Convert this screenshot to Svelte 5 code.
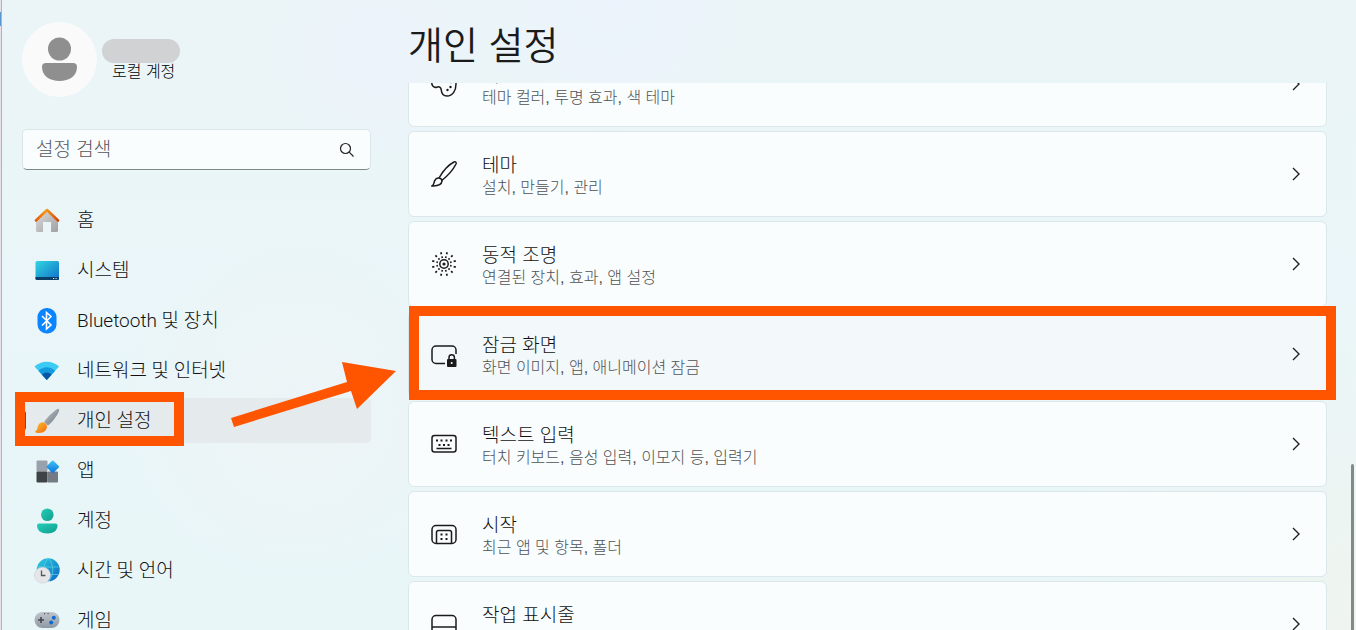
<script>
	import { onMount } from 'svelte';

	const menu = [
		{ id: 'home', label: '홈' },
		{ id: 'system', label: '시스템' },
		{ id: 'bluetooth', label: 'Bluetooth 및 장치' },
		{ id: 'network', label: '네트워크 및 인터넷' },
		{ id: 'personal', label: '개인 설정' },
		{ id: 'apps', label: '앱' },
		{ id: 'account', label: '계정' },
		{ id: 'time', label: '시간 및 언어' },
		{ id: 'game', label: '게임' }
	];

	const cards = [
		{ id: 'color', title: '색', text: '테마 컬러, 투명 효과, 색 테마' },
		{ id: 'theme', title: '테마', text: '설치, 만들기, 관리' },
		{ id: 'light', title: '동적 조명', text: '연결된 장치, 효과, 앱 설정' },
		{ id: 'lock', title: '잠금 화면', text: '화면 이미지, 앱, 애니메이션 잠금' },
		{ id: 'text', title: '텍스트 입력', text: '터치 키보드, 음성 입력, 이모지 등, 입력기' },
		{ id: 'start', title: '시작', text: '최근 앱 및 항목, 폴더' },
		{ id: 'taskbar', title: '작업 표시줄', text: '' }
	];

	const rays = Array.from({ length: 12 }, (_, i) => i * 30 + 15);

	let current = 'personal';
	let search = '';
	let list;

	onMount(() => {
		list.scrollTop = 42;
	});
</script>

<div class="window">
	<div class="edge"></div>
	<aside>
		<div class="user">
			<svg class="avatar" viewBox="0 0 75 75">
				<circle cx="37.5" cy="37.5" r="37.5" fill="#fafafa" />
				<circle cx="37.5" cy="27" r="11.5" fill="#8f8f8f" />
				<path d="M24 41h27q4 0 4 4c0 9-8 14-17.500 14S20 54 20 45q0-4 4-4z" fill="#8f8f8f" />
			</svg>
			<div class="who">
				<div class="name"></div>
				<div class="kind">로컬 계정</div>
			</div>
		</div>

		<div class="search">
			<input bind:value={search} placeholder="설정 검색" aria-label="설정 검색" />
			<svg width="16" height="16" viewBox="0 0 16 16" fill="none" stroke="#222" stroke-width="1.200">
				<circle cx="6.500" cy="6.500" r="5" />
				<path d="M10.200 10.200l4.300 4.300" />
			</svg>
		</div>

		<nav>
			{#each menu as item}
				<a
					href="#{item.id}"
					class:active={current === item.id}
					on:click|preventDefault={() => (current = item.id)}
				>
					<svg class="icon" viewBox="0 0 26 26">
						{#if item.id === 'home'}
							<defs>
								<linearGradient id="wall" x1="0" y1="0" x2="1" y2="1"><stop stop-color="#dcdcdc" /><stop offset="1" stop-color="#a0a0a3" /></linearGradient>
								<linearGradient id="roof"><stop stop-color="#e8590c" /><stop offset=".45" stop-color="#f59a17" /><stop offset="1" stop-color="#d9430b" /></linearGradient>
							</defs>
							<path d="M13 3L2 13v9.500q0 1.500 1.500 1.500H9V14h8v10h5.500q1.500 0 1.500-1.500V13z" fill="url(#wall)" />
							<path d="M2 12.500L13 2l11 10.500" fill="none" stroke="url(#roof)" stroke-width="2.600" stroke-linecap="round" stroke-linejoin="round" />
						{:else if item.id === 'system'}
							<defs>
								<linearGradient id="screen" x1="0" y1="0" x2="1" y2="1"><stop stop-color="#32d6e2" /><stop offset="1" stop-color="#0f6fc9" /></linearGradient>
							</defs>
							<rect x="1.500" y="3" width="23.500" height="19" rx="1.500" fill="url(#screen)" />
							<path d="M1.500 19H25v1.500q0 1.500-1.500 1.500H3q-1.500 0-1.500-1.500z" fill="#0b3d66" />
							<path d="M19 20.500h1.200M21.500 20.500h1.200" stroke="#d5e6ef" />
						{:else if item.id === 'bluetooth'}
							<rect x="3.500" y="0" width="19" height="25.500" rx="9" fill="#0a84ff" />
							<path d="M8 8l9 9-4.500 4V4.500L17 8.500l-9 9" fill="none" stroke="#fff" stroke-width="1.600" />
						{:else if item.id === 'network'}
							<path d="M0.500 8.500C7 2.200 18.500 2.200 25 8.500L12.800 22z" fill="#3ccbf4" />
							<path d="M4.500 13c4.500-5 12-5 16.500 0L12.800 22z" fill="#159bdd" />
							<path d="M8 16.800c2.500-3.200 7-3.200 9.500 0L12.800 22z" fill="#0b55a5" />
						{:else if item.id === 'personal'}
							<defs>
								<linearGradient id="stick" x1="0" y1="0" x2="1" y2="1"><stop stop-color="#c3cad1" /><stop offset="1" stop-color="#69717b" /></linearGradient>
								<linearGradient id="paint" x1="0" y1="0" x2="1" y2="1"><stop stop-color="#ffc22d" /><stop offset="1" stop-color="#ee6a12" /></linearGradient>
							</defs>
							<path d="M23.500 1c1.500-.5 2 .5 1.500 2-2 5-6.500 11-11 14.500l-4-3.500C13.500 9 19 3.500 23.500 1z" fill="url(#stick)" />
							<path d="M5 16c2.500-3 6-2 7.500.5 2 5-3 8.500-7.500 8.500-2 0-4-.5-4-1.500 3-1.500 2-5 4-7.500z" fill="url(#paint)" />
						{:else if item.id === 'apps'}
							<defs>
								<linearGradient id="gem" x1="0" y1="0" x2="1" y2="1"><stop stop-color="#45c5f7" /><stop offset="1" stop-color="#0872d8" /></linearGradient>
							</defs>
							<rect x="2.500" y="2.500" width="11" height="11" rx="1" fill="#9aa1ab" />
							<rect x="2.500" y="13.500" width="11" height="11" rx="1" fill="#3e4347" />
							<rect x="13.500" y="13.500" width="10.500" height="11" rx="1" fill="#737a83" />
							<rect x="14" y="4" width="9.500" height="9.500" rx="1" fill="url(#gem)" transform="rotate(45 18.750 8.750)" />
						{:else if item.id === 'account'}
							<defs>
								<linearGradient id="teal" x1="0" y1="0" x2="1" y2="1"><stop stop-color="#26cdb9" /><stop offset="1" stop-color="#109e8f" /></linearGradient>
							</defs>
							<circle cx="13.300" cy="6.800" r="6.300" fill="url(#teal)" />
							<path d="M5 15.500h16.500q2 0 2 2c0 5-4 8-10.200 8S3 22.500 3 17.500q0-2 2-2z" fill="url(#teal)" />
						{:else if item.id === 'time'}
							<defs>
								<linearGradient id="globe" x1="0" y1="0" x2="1" y2="1"><stop stop-color="#2fd0dd" /><stop offset="1" stop-color="#0c64c4" /></linearGradient>
							</defs>
							<circle cx="14.200" cy="11.800" r="11.500" fill="url(#globe)" />
							<path d="M3 9h21.500M8 16.500h16M13.500 1c-5 6-5 15 0 22M15 1c5 6 5 15 0 22" fill="none" stroke="#59d5ec" opacity=".7" />
							<circle cx="8.500" cy="17.200" r="8" fill="#e6e6e8" stroke="#c4c8ca" stroke-width=".5" />
							<path d="M7.500 12.500v5H11.500" fill="none" stroke="#58595b" stroke-width="1.300" />
						{:else}
							<defs>
								<linearGradient id="pad" x1="0" y1="0" x2="0" y2="1"><stop stop-color="#c0c6cd" /><stop offset="1" stop-color="#8f98a3" /></linearGradient>
							</defs>
							<rect x="0.500" y="4" width="25" height="16" rx="8" fill="url(#pad)" />
							<path d="M4 12h6M7 9v6" stroke="#44484e" stroke-width="1.600" />
							<circle cx="19.800" cy="9.800" r="2" fill="#0e6cd0" />
							<circle cx="17.200" cy="14.500" r="2" fill="#0e6cd0" />
							<path d="M10 5.700h1.200M13.500 5.700h1.200" stroke="#44484e" />
						{/if}
					</svg>
					<span>{item.label}</span>
					{#if item.id === 'personal'}
						<i class="mark"></i>
					{/if}
				</a>
			{/each}
		</nav>
	</aside>

	<main>
		<h1>개인 설정</h1>
		<div class="list" bind:this={list}>
			{#each cards as card}
				<button class="card" class:hover={card.id === 'lock'}>
					<svg class="icon line" viewBox="0 0 26 26">
						{#if card.id === 'color'}
							<path d="M.8 13c.8 2.800 3 3.800 5 3.200 3-1 4.200.3 4.500 3 .3 3.500 2.500 5.800 5.700 5.800 5.500 0 9-5 9-12C25 6 20 1 13 1 6 1 2 6 .8 13z" />
							<g fill="#1b1b1b" stroke="none">
								<circle cx="16.500" cy="19" r="1.200" />
								<circle cx="19.500" cy="16" r="1.200" />
								<circle cx="20" cy="11" r="1.200" />
							</g>
						{:else if card.id === 'theme'}
							<path d="M8 17C12 10 18 3.500 23 1c1.500-.7 2.700.5 2 2C22.500 8 17 14.500 10.800 19.500" />
							<path d="M8 17c2 .2 3 1.200 3 3.200-.5 4-4 5-10 4.700 2.300-1.200 1.800-3 2.600-5C4.500 18 6 16.800 8 17z" />
						{:else if card.id === 'light'}
							<circle cx="13" cy="13" r="4.200" />
							<circle cx="13" cy="13" r="1.600" fill="#1b1b1b" stroke="none" />
							{#each rays as a}
								<path d="M13 6.700v-1.600M13 3V.8" stroke-width="1.700" transform="rotate({a} 13 13)" />
							{/each}
						{:else if card.id === 'lock'}
							<path d="M14 22.500H5a4 4 0 0 1-4-4V9a4 4 0 0 1 4-4h16a4 4 0 0 1 4 4v4" />
							<rect x="16" y="18" width="9.500" height="8" rx="1" fill="#1b1b1b" stroke="none" />
							<path d="M18 18v-1.500a2.700 2.700 0 0 1 5.400 0V18" />
							<circle cx="20.700" cy="22" r="1" fill="#fff" stroke="none" />
						{:else if card.id === 'text'}
							<rect x="1" y="4.500" width="24" height="16.500" rx="2.500" />
							<path d="M5 9.500h2M9.500 9.500h2M14.500 9.500h2M19 9.500h2M7.500 14h2M12 14h2M16.500 14h2" stroke-width="2" />
							<path d="M5.500 17.500h15" />
						{:else if card.id === 'start'}
							<rect x="1" y="4.500" width="24" height="18" rx="4" />
							<path d="M5.500 22V11.500a2 2 0 0 1 2-2h11a2 2 0 0 1 2 2V22" />
							<path d="M9.500 13.500h2M14.500 13.500h2M9.500 18h2M14.500 18h2" stroke-width="2" />
						{:else}
							<rect x="1" y="4.500" width="24" height="18" rx="4" />
							<path d="M1 16h24" />
						{/if}
					</svg>
					<span class="labels">
						<span class="title">{card.title}</span>
						<span class="text">{card.text}</span>
					</span>
					<svg class="arrow" viewBox="0 0 8 14">
						<path d="M1 1l6 6-6 6" fill="none" stroke="#222" stroke-width="1.400" />
					</svg>
					{#if card.id === 'lock'}
						<i class="mark"></i>
					{/if}
				</button>
			{/each}
		</div>
		<div class="thumb"></div>
	</main>

	<svg class="pointer" viewBox="0 0 166 66">
		<path d="M1 57L117 21L112 1L166 10L127 48L121 30L4 66z" fill="#ff5500" />
	</svg>
</div>

<style>
	:global(body) {
		background-color: #eaf5f8;
	}
	.window {
		position: relative;
		height: 100vh;
		overflow: hidden;
		display: flex;
		background:
			radial-gradient(circle at 28% 8%, #ecf3fb 0, transparent 10%),
			radial-gradient(circle at 45% 0, #ecf3fc 0, transparent 14%),
			radial-gradient(circle at 22% 66%, #eef4f7 0, transparent 16%),
			radial-gradient(circle at 100% 100%, #eff4ef 0, transparent 22%),
			linear-gradient(#ebf5f8, #e8f6f8);
		color: #111;
		font-family: 'Liberation Sans', 'Noto Sans CJK KR', sans-serif;
		font-weight: 300;
		font-size: 19px;
		line-height: 22px;
	}
	.edge {
		flex: none;
		width: 1px;
		border-right: 1px solid #b4b4b8;
		background: linear-gradient(#e6e1e8 12px, #5a96d2 12px, #5a96d2 26px, #e6e1e8 26px);
	}
	aside {
		flex: none;
		width: 349px;
		padding: 22px 37px 0 20px;
	}
	.user {
		display: flex;
		gap: 5px;
		height: 75px;
	}
	.avatar {
		width: 75px;
		height: 75px;
	}
	.who {
		padding-top: 17px;
	}
	.name {
		width: 78px;
		height: 24px;
		border-radius: 12px;
		background-color: #d1d2d4;
	}
	.kind {
		padding-left: 10px;
		font-size: 16px;
		line-height: 18px;
		color: #000;
	}
	.search {
		box-sizing: border-box;
		display: flex;
		align-items: center;
		height: 41px;
		margin-top: 32px;
		padding: 0 15px 0 13px;
		border: 1px solid #dae6ea;
		border-bottom-color: #7d8684;
		border-radius: 5px;
		background-color: #f9fdfe;
	}
	input {
		flex: 1;
		min-width: 0;
		padding: 0;
		border: none;
		outline: none;
		background: none;
		font: inherit;
		color: inherit;
	}
	input::placeholder {
		color: #555859;
		opacity: 1;
	}
	nav {
		display: flex;
		flex-direction: column;
		gap: 5px;
		margin-top: 28px;
		font-family: Roboto, 'Noto Sans CJK KR', sans-serif;
	}
	nav a {
		position: relative;
		flex: none;
		display: flex;
		align-items: center;
		gap: 17px;
		height: 45px;
		padding-left: 12px;
		border-radius: 5px;
		color: inherit;
		text-decoration: none;
	}
	nav a.active {
		background-color: #e5ebed;
	}
	nav a.active::before {
		content: '';
		position: absolute;
		left: 0;
		top: 13px;
		width: 4px;
		height: 19px;
		border-radius: 2px;
		background-color: #38625f;
	}
	.icon {
		flex: none;
		width: 26px;
		height: 26px;
	}
	.mark {
		position: absolute;
		box-sizing: border-box;
		border: 10px solid #ff5500;
		pointer-events: none;
	}
	nav .mark {
		left: -7px;
		top: -6px;
		width: 169px;
		height: 54px;
	}
	main {
		position: relative;
		flex: 1;
		min-width: 0;
		display: flex;
		flex-direction: column;
	}
	h1 {
		flex: none;
		box-sizing: border-box;
		height: 83px;
		margin: 0;
		padding-top: 23px;
		font-size: 38px;
		line-height: 46px;
		font-weight: 350;
		color: #1b1b1b;
	}
	.list {
		flex: 1;
		min-height: 0;
		display: flex;
		flex-direction: column;
		gap: 4px;
		padding-right: 29px;
		overflow-y: auto;
		scrollbar-width: none;
	}
	.card {
		position: relative;
		flex: none;
		display: flex;
		align-items: center;
		gap: 25px;
		height: 86px;
		padding: 0 26px 0 22px;
		border: 1px solid #dbe7ea;
		border-radius: 6px;
		background-color: #f9fdfe;
		font: inherit;
		color: inherit;
		text-align: left;
	}
	.card.hover {
		background-color: #f3f8fa;
	}
	.card .mark {
		inset: -6px -10px -4px 0;
	}
	.line {
		fill: none;
		stroke: #1b1b1b;
		stroke-width: 1.5;
	}
	.labels {
		flex: 1;
		display: flex;
		flex-direction: column;
		padding-top: 6px;
	}
	.text {
		min-height: 22px;
		font-size: 16px;
		color: #505354;
	}
	.arrow {
		width: 8px;
		height: 14px;
	}
	.thumb {
		position: absolute;
		right: 2px;
		top: 464px;
		bottom: 0;
		width: 3px;
		border-radius: 2px 2px 0 0;
		background-color: #858a89;
	}
	.pointer {
		position: absolute;
		left: 230px;
		top: 361px;
		width: 166px;
		height: 66px;
	}
</style>
